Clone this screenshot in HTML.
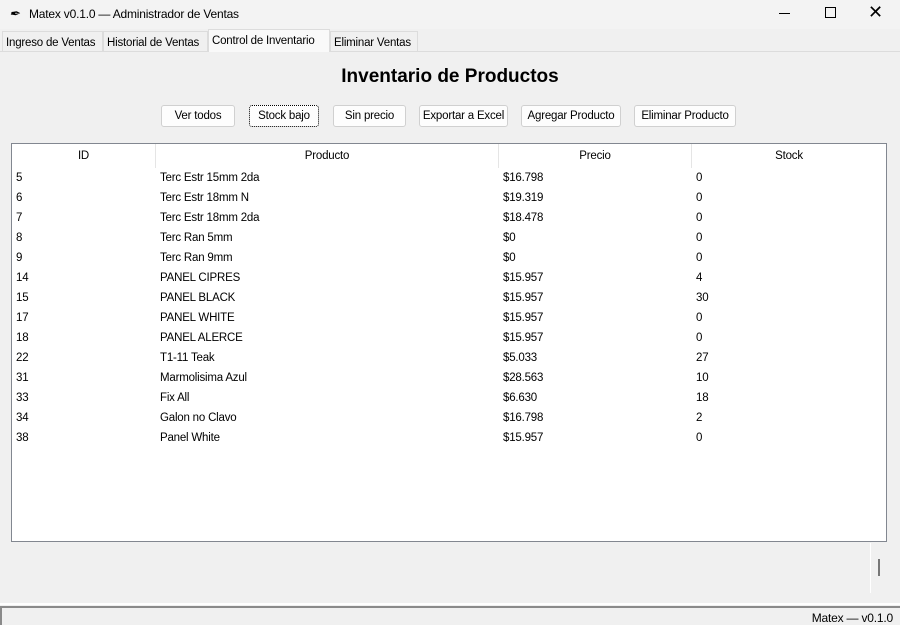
<!DOCTYPE html>
<html><head><meta charset="utf-8"><style>
*{margin:0;padding:0;box-sizing:border-box}
body{width:900px;height:625px;background:#f0f0f0;font-family:"Liberation Sans",sans-serif;font-size:12px;color:#000;position:relative;overflow:hidden}
.a{position:absolute;white-space:nowrap}
.title{left:0;top:0;width:900px;height:29px;background:#f3f3f3}
.tab{top:31px;height:20px;border:1px solid #dcdcdc;border-bottom:none;background:#f0f0f0;padding:5px 0 0 3px;font-size:11.5px;letter-spacing:-0.2px;overflow:hidden}
.btn{top:105px;height:22px;background:#fdfdfd;border:1px solid #d0d0d0;border-radius:3px;text-align:center;line-height:20px;font-size:11.5px;letter-spacing:-0.2px}
.tree{left:11px;top:143px;width:876px;height:399px;background:#fff;border:1px solid #828790}
.h{top:0;height:24px;line-height:24px;text-align:center;border-right:1px solid #e5e5e5;background:#fff}
.tree{font-size:11.5px;letter-spacing:-0.2px}
</style></head><body>
<div class="a title"></div>
<div class="a" style="left:9px;top:6px;font-size:13px;font-style:italic">&#10002;</div>
<div class="a" style="left:29px;top:7px;font-size:12px;letter-spacing:-0.2px">Matex v0.1.0 — Administrador de Ventas</div>
<div class="a" style="left:779px;top:13px;width:11px;height:1px;background:#000"></div>
<div class="a" style="left:825px;top:7px;width:11px;height:11px;border:1px solid #000"></div>
<div class="a" style="left:868px;top:2px;font-size:18px">✕</div>
<div class="a" style="left:0;top:51px;width:900px;height:1px;background:#dcdcdc"></div>
<div class="a tab" style="left:2px;width:101px">Ingreso de Ventas</div>
<div class="a tab" style="left:103px;width:105px">Historial de Ventas</div>
<div class="a tab" style="left:208px;top:29px;height:23px;width:122px;background:#f9f9f9;padding-top:5px">Control de Inventario</div>
<div class="a tab" style="left:330px;width:88px">Eliminar Ventas</div>
<div class="a" style="left:0;top:66px;width:900px;text-align:center;font-weight:bold;font-size:19px">Inventario de Productos</div>
<div class="a btn" style="left:161px;width:74px">Ver todos</div>
<div class="a btn" style="left:249px;width:70px;border:1px dotted #000">Stock bajo</div>
<div class="a btn" style="left:333px;width:73px">Sin precio</div>
<div class="a btn" style="left:419px;width:89px">Exportar a Excel</div>
<div class="a btn" style="left:521px;width:100px">Agregar Producto</div>
<div class="a btn" style="left:634px;width:102px">Eliminar Producto</div>
<div class="a tree">
<div class="a h" style="left:0;width:144px">ID</div>
<div class="a h" style="left:144px;width:343px">Producto</div>
<div class="a h" style="left:487px;width:193px">Precio</div>
<div class="a h" style="left:680px;width:194px;border-right:none">Stock</div>
<div class="a" style="left:4px;top:24px;line-height:20px">5<br>6<br>7<br>8<br>9<br>14<br>15<br>17<br>18<br>22<br>31<br>33<br>34<br>38</div>
<div class="a" style="left:148px;top:24px;line-height:20px">Terc Estr 15mm 2da<br>Terc Estr 18mm N<br>Terc Estr 18mm 2da<br>Terc Ran 5mm<br>Terc Ran 9mm<br>PANEL CIPRES<br>PANEL BLACK<br>PANEL WHITE<br>PANEL ALERCE<br>T1-11 Teak<br>Marmolisima Azul<br>Fix All<br>Galon no Clavo<br>Panel White</div>
<div class="a" style="left:491px;top:24px;line-height:20px">$16.798<br>$19.319<br>$18.478<br>$0<br>$0<br>$15.957<br>$15.957<br>$15.957<br>$15.957<br>$5.033<br>$28.563<br>$6.630<br>$16.798<br>$15.957</div>
<div class="a" style="left:684px;top:24px;line-height:20px">0<br>0<br>0<br>0<br>0<br>4<br>30<br>0<br>0<br>27<br>10<br>18<br>2<br>0</div>
</div>
<div class="a" style="left:870px;top:543px;width:1px;height:50px;background:#fff"></div>
<div class="a" style="left:878px;top:559px;width:2px;height:17px;background:#777"></div>
<div class="a" style="left:0;top:603px;width:900px;height:2px;background:#fff"></div>
<div class="a" style="left:0;top:606px;width:900px;height:2px;background:#8a8a8a"></div>
<div class="a" style="left:0;top:606px;width:2px;height:19px;background:#8a8a8a"></div>
<div class="a" style="right:7px;top:611px;letter-spacing:-0.2px">Matex — v0.1.0</div>
</body></html>
